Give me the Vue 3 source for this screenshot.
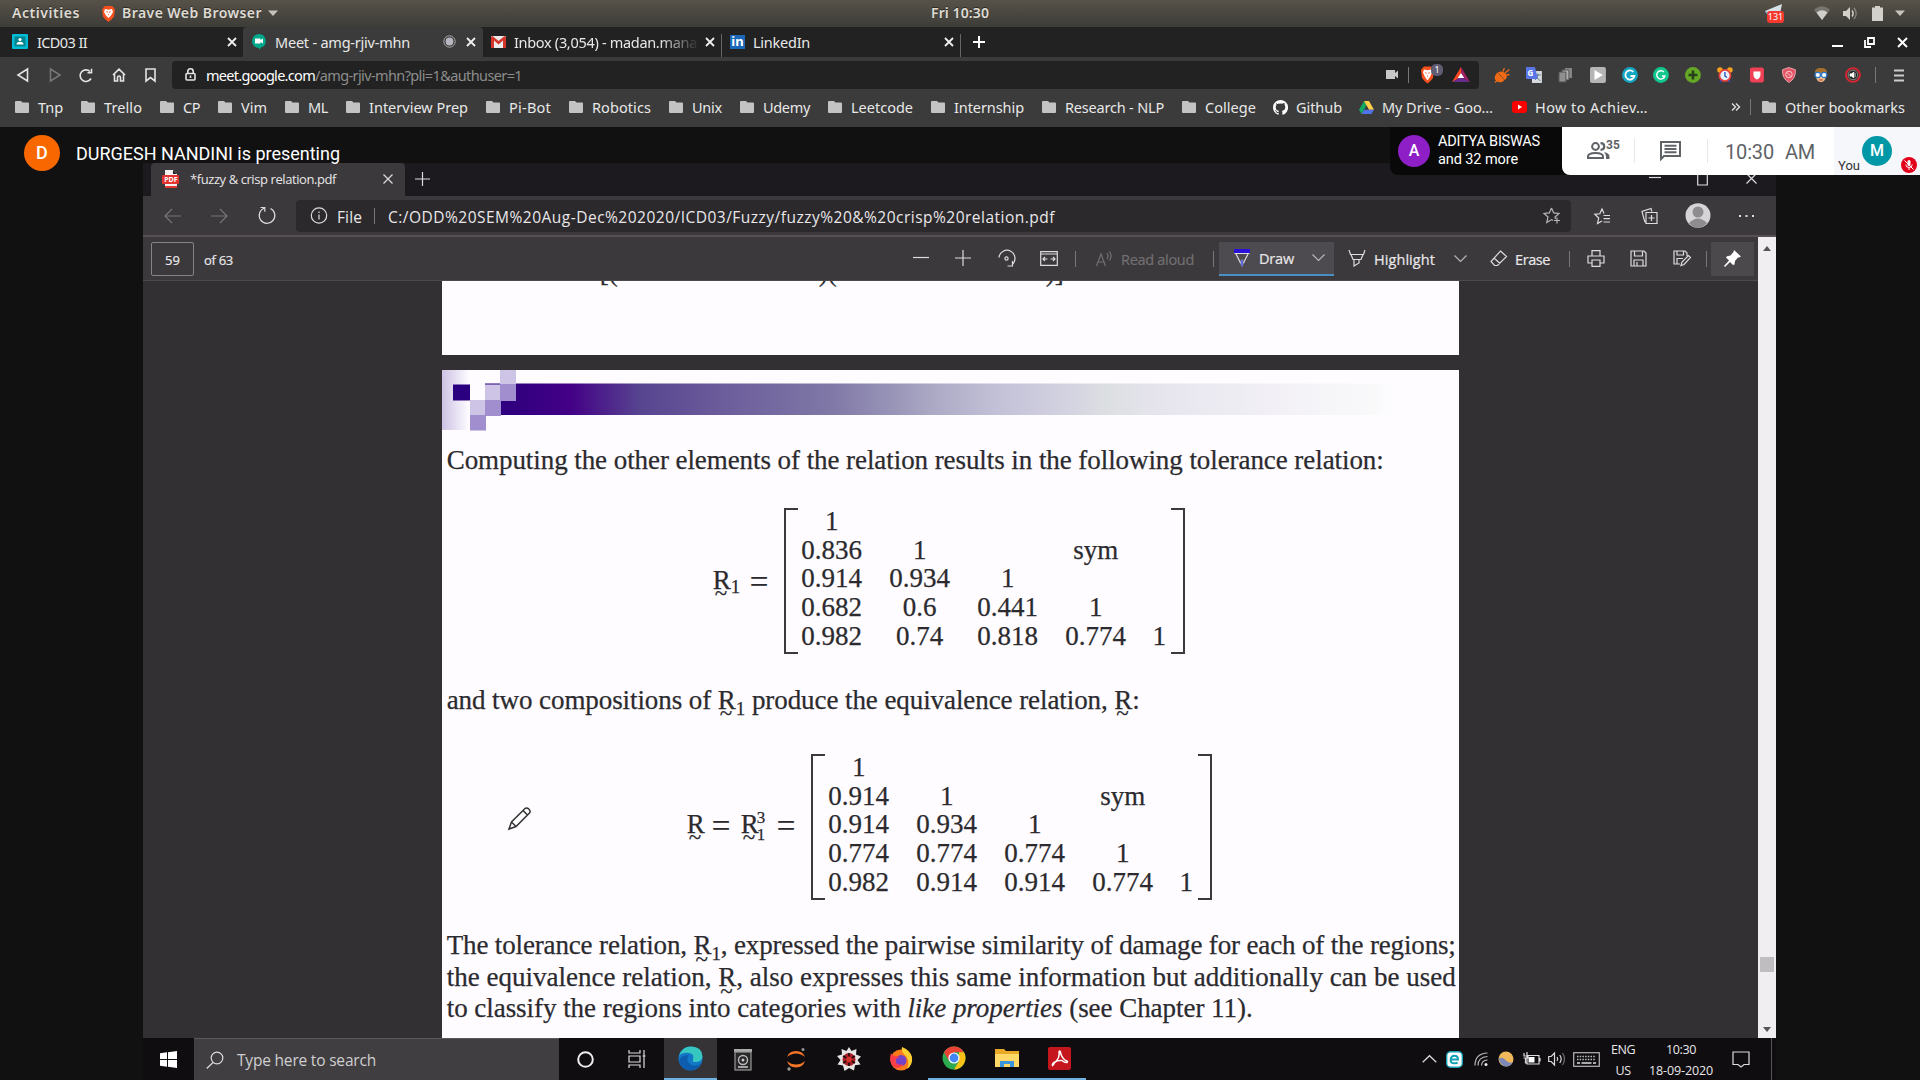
<script setup>
// Stretches or tightens tracking so a label occupies the given width
const vFit = {
  mounted(el, { value }) {
    const n = el.textContent.length
    let spacing = 0
    for (let i = 0; i < 3; i++) {
      spacing += (value - el.getBoundingClientRect().width) / n
      el.style.letterSpacing = spacing.toFixed(3) + 'px'
    }
  },
}

const folders = [
  ['Tnp', 25], ['Trello', 38], ['CP', 17], ['Vim', 26], ['ML', 20], ['Interview Prep', 99],
  ['Pi-Bot', 42], ['Robotics', 59], ['Unix', 30], ['Udemy', 47], ['Leetcode', 62],
  ['Internship', 70], ['Research - NLP', 99], ['College', 51],
]

const toleranceRows = [
  ['1', '', '', '', ''],
  ['0.836', '1', '', 'sym', ''],
  ['0.914', '0.934', '1', '', ''],
  ['0.682', '0.6', '0.441', '1', ''],
  ['0.982', '0.74', '0.818', '0.774', '1'],
]
const equivalenceRows = [
  ['1', '', '', '', ''],
  ['0.914', '1', '', 'sym', ''],
  ['0.914', '0.934', '1', '', ''],
  ['0.774', '0.774', '0.774', '1', ''],
  ['0.982', '0.914', '0.914', '0.774', '1'],
]
</script>

<template>
  <div class="screen">
    <!-- GNOME top bar -->
    <header class="gnome">
      <span class="g-text" v-fit="68">Activities</span>
      <svg class="g-brave" width="15" height="17" viewBox="0 0 15 17"><path d="M4 1h7l1.500 1.600 1.500 2-1 7-2.500 3L7.500 17l-3-2.400L2 11.600 1 4.600l1.500-2z" fill="#f4511e" /><path d="M4 4l3.500.7L11 4l1 3-2 3.500-2.500 2.500L5 10.500 3 7z" fill="#fff" /><path d="M4.800 6.500h2v1.400zM10.200 6.500h-2v1.400zM7 9h1l-.5 1.800z" fill="#f4511e" /></svg>
      <span class="g-text" v-fit="140">Brave Web Browser</span>
      <svg width="10" height="6" viewBox="0 0 10 6"><path d="M0 .5h10L5 6z" fill="#c6c3bd" /></svg>
      <span class="g-text" v-fit="58">Fri 10:30</span>
      <span class="telegram"><svg width="19" height="20" viewBox="0 0 19 20"><path d="M0 8L17 1l-2 10-8-3-5 3z" fill="#d5e1e7" /><path d="M0 8l5 2v6z" fill="#69b5d9" /></svg><b>131</b></span>
      <svg width="16" height="14" viewBox="0 0 16 14"><path d="M0 4Q8-3.500 16 4L8 14z" fill="#77746d" /><path d="M2.500 6.500Q8 2 13.500 6.500L8 14z" fill="#d2d0cb" /></svg>
      <svg width="16" height="15" viewBox="0 0 16 15"><path d="M1 5h3l4-4v13l-4-4H1z" fill="#d2d0cb" /><path d="M10 4.500q2.200 3 0 6" stroke="#d2d0cb" stroke-width="1.500" fill="none" /><path d="M12 2q4.500 5.500 0 11" stroke="#85827b" stroke-width="1.500" fill="none" /></svg>
      <svg width="11" height="15" viewBox="0 0 11 15"><path d="M3 0h5v1.500h3V15H0V1.500h3z" fill="#d2d0cb" /></svg>
      <svg width="10" height="6" viewBox="0 0 10 6"><path d="M0 .5h10L5 6z" fill="#c6c3bd" /></svg>
    </header>

    <!-- Tab strip -->
    <nav class="tabs">
      <div class="tab tab1">
        <svg width="16" height="15" viewBox="0 0 16 15"><rect width="16" height="15" rx="1" fill="#00bcd4" /><rect x="2.500" y="2.500" width="11" height="10" fill="#00838f" /><circle cx="8" cy="5.500" r="1.600" fill="#fff" /><path d="M4.500 10.500q0-2.700 3.500-2.700t3.500 2.700z" fill="#fff" /></svg>
        <span v-fit="50">ICD03 II</span>
        <svg class="cross" width="10" height="10" viewBox="0 0 10 10"><path d="M1 1l8 8M9 1L1 9" /></svg>
      </div>
      <div class="tab tab2">
        <svg width="14" height="16" viewBox="0 0 14 16"><path d="M7 0a7 7 0 0 1 2 13.600L7 16v-2A7 7 0 0 1 7 0z" fill="#00a88b" /><path d="M3 4.500h5.500v1.600L11 4.500v5l-2.500-1.600v1.600H3z" fill="#fff" /></svg>
        <span v-fit="135">Meet - amg-rjiv-mhn</span>
        <svg width="13" height="13" viewBox="0 0 13 13"><circle cx="6.500" cy="6.500" r="5.700" fill="none" stroke="#aaa" stroke-width="1" /><circle cx="6.500" cy="6.500" r="3.900" fill="#b8b6c0" /></svg>
        <svg class="cross" width="10" height="10" viewBox="0 0 10 10"><path d="M1 1l8 8M9 1L1 9" /></svg>
      </div>
      <div class="tab tab3">
        <svg width="15" height="12" viewBox="0 0 15 12"><rect width="15" height="12" rx="1" fill="#ededed" /><path d="M0 1v11h3V4.500l4.500 4 4.500-4V12h3V1l-1.500-1-6 5-6-5z" fill="#d5362b" /></svg>
        <div class="fade"><span v-fit="183">Inbox (3,054) - madan.mana</span></div>
        <svg class="cross" width="10" height="10" viewBox="0 0 10 10"><path d="M1 1l8 8M9 1L1 9" /></svg>
      </div>
      <div class="tab tab4">
        <span class="linkedin">in</span>
        <span v-fit="57">LinkedIn</span>
        <svg class="cross" width="10" height="10" viewBox="0 0 10 10"><path d="M1 1l8 8M9 1L1 9" /></svg>
      </div>
      <svg class="newtab" width="12" height="12" viewBox="0 0 12 12"><path d="M6 0v12M0 6h12" stroke="#fff" stroke-width="2" /></svg>
      <div class="winctl">
        <svg width="11" height="12" viewBox="0 0 11 12"><path d="M0 10h11" stroke="#fff" stroke-width="2" /></svg>
        <svg width="11" height="11" viewBox="0 0 11 11"><path d="M4 1h6v6H4zM1 3v7h6" stroke="#fff" stroke-width="1.800" fill="none" /></svg>
        <svg width="11" height="11" viewBox="0 0 11 11"><path d="M1 1l9 9M10 1l-9 9" stroke="#fff" stroke-width="2" /></svg>
      </div>
    </nav>

    <!-- Address row -->
    <div class="address">
      <svg width="12" height="14" viewBox="0 0 12 14"><path d="M10.500 1v12L1 7z" class="ln" /></svg>
      <svg width="12" height="14" viewBox="0 0 12 14"><path d="M1.500 1v12L11 7z" class="ln dim" /></svg>
      <svg width="14" height="15" viewBox="0 0 14 15"><path d="M12 10.500A5.800 5.800 0 1 1 11 3.500" class="ln" /><path d="M8.500 4.800h4V.8" class="ln" /></svg>
      <svg width="14" height="14" viewBox="0 0 14 14"><path d="M1 7l6-5.800L13 7M2.500 6v7h3V9.500a1.500 1.500 0 0 1 3 0V13h3V6" class="ln" /></svg>
      <svg width="11" height="14" viewBox="0 0 11 14"><path d="M1 1h9v12L5.500 9.500 1 13z" class="ln" /></svg>
      <div class="urlbar">
        <svg width="11" height="13" viewBox="0 0 11 13"><path d="M2.800 5V3.500a2.700 2.700 0 0 1 5.400 0V5" class="ln" /><rect x="1" y="5.500" width="9" height="6.500" rx="1" class="ln" /><path d="M5.500 7.500v2.500" class="ln" /></svg>
        <span class="host" v-fit="109">meet.google.com</span><span class="path" v-fit="207">/amg-rjiv-mhn?pli=1&amp;authuser=1</span>
        <svg class="cam" width="12" height="9" viewBox="0 0 12 9"><path d="M0 0h9v3l3-2.500v8L9 6v3H0z" fill="#c8c8c8" /></svg>
        <i class="vbar"></i>
        <span class="shield"><svg width="15" height="18" viewBox="0 0 15 17"><path d="M4 0h7l1.500 1.600 1.500 2-1 8-2.500 3L7.500 17l-3-2.400L2 11.600 1 3.600l1.500-2z" fill="#f4511e" /><path d="M4 3l3.500.7L11 3l1 3-2 4.500L7.500 14 5 10.500 3 6z" fill="#fff" /><path d="M4.500 6h2v1.400zM10.500 6h-2v1.400zM7 9h1l-.5 2z" fill="#f4511e" /></svg><b>1</b></span>
        <svg width="18" height="15" viewBox="0 0 18 15"><path d="M9 0L0 15l9-5z" fill="#ff4724" /><path d="M9 0l9 15-9-5z" fill="#9e1f63" /><path d="M0 15h18l-9-5z" fill="#662d91" /><path d="M9 6l3.200 5H5.800z" fill="#fff" /></svg>
      </div>
      <div class="exts">
        <svg viewBox="0 0 16 16"><path d="M3.500 6.500l6 6.500q-3 3-6.500.5T3.500 6.500z" fill="#f26b15" stroke="#f26b15" stroke-width="1.400" /><path d="M1 15.500l2-2M5 5.500l6 6.500q2.500-2.500 0-5T5 5.500zM9 4.500l1.500-3.500M11 6l4.500-3.500M12.500 8l3-.5" fill="#f26b15" stroke="#f26b15" stroke-width="1.300" /></svg>
        <svg viewBox="0 0 16 16"><rect x="6" y="4" width="10" height="12" fill="#d9dce0" /><path d="M9 8h6M12 6.500V8q0 3-3 5M10.500 10l4 4" stroke="#607d8b" fill="none" /><path d="M0 0h9l3 12H1q-1 0-1-1z" fill="#5876e8" /><text x="1.500" y="9" font-size="8" font-weight="700" fill="#fff">G</text></svg>
        <svg viewBox="0 0 16 16"><path d="M7 1h7v10H7z" fill="#8b8b8b" /><path d="M4 3h7v10H4z" fill="#b0b0b0" stroke="#555" /><path d="M1 5h7v10H1z" fill="#8f8f8f" stroke="#555" /></svg>
        <svg viewBox="0 0 16 16"><rect width="16" height="16" rx="2" fill="#b5b5b5" /><path d="M4.500 3v10L13 8z" fill="#fff" /></svg>
        <svg viewBox="0 0 16 16"><circle cx="8" cy="8" r="8" fill="#12a5c4" /><path d="M11.500 5A4.600 4.600 0 1 0 12.500 9H8.500" stroke="#fff" stroke-width="1.800" fill="none" /></svg>
        <svg viewBox="0 0 16 16"><circle cx="8" cy="8" r="8" fill="#11c78e" /><path d="M11 5A4.200 4.200 0 1 0 12 9H9" stroke="#fff" stroke-width="1.400" fill="none" /></svg>
        <svg viewBox="0 0 16 16"><circle cx="8" cy="8" r="8" fill="#65a825" /><path d="M8 3.500v9M3.500 8h9" stroke="#26411a" stroke-width="2.600" /></svg>
        <svg viewBox="0 0 16 16"><circle cx="3" cy="3" r="2.800" fill="#f9a11b" /><circle cx="13" cy="3" r="2.800" fill="#f9a11b" /><path d="M3 15l2-3M13 15l-2-3" stroke="#2948b8" stroke-width="2" /><circle cx="8" cy="8.500" r="5.600" fill="#e3f1fb" stroke="#e8413c" stroke-width="1.800" /><path d="M8 5v4l2 1.500" stroke="#2948b8" fill="none" stroke-width="1.300" /></svg>
        <svg viewBox="0 0 16 16"><rect x="1" y=".5" width="14" height="15" rx="2" fill="#ef4056" /><path d="M4.500 4.500h7V8q0 3-3.500 4.500Q4.500 11 4.500 8z" fill="#fff" /></svg>
        <svg viewBox="0 0 16 16"><path d="M8 .5l6.500 2.200q.5 8.800-6.500 12.800Q1 11.500 1.500 2.700z" fill="#e35464" stroke="#efa4aa" /><circle cx="8" cy="7.500" r="3.300" fill="none" stroke="#f6c7cc" /><path d="M5.700 5.200l4.600 4.600" stroke="#f6c7cc" /></svg>
        <svg viewBox="0 0 16 16"><path d="M2 7Q1 1 8 1t6 6l-1 2H3z" fill="#a7712c" /><path d="M3 6h10v4q-1 5-5 5t-5-5z" fill="#eec08a" /><circle cx="4.800" cy="8" r="2.700" fill="#fff" stroke="#2877c9" stroke-width="1.200" /><circle cx="11.200" cy="8" r="2.700" fill="#fff" stroke="#2877c9" stroke-width="1.200" /><path d="M6 13h4" stroke="#b33" /></svg>
        <svg viewBox="0 0 16 16"><circle cx="8" cy="8" r="7" fill="#3a3a3a" stroke="#e02331" stroke-width="1.800" /><circle cx="8" cy="8" r="4.800" fill="#222" stroke="#999" stroke-width=".8" /><path d="M5 6.800h1.500L9 5v6L6.500 9.200H5zM10.300 6v4" fill="#fff" stroke="#fff" stroke-width=".6" /></svg>
      </div>
      <i class="vbar"></i>
      <svg class="burger" width="10" height="13" viewBox="0 0 10 13"><path d="M0 1.500h10M0 6.500h10M0 11.500h10" stroke="#ccc" stroke-width="1.800" /></svg>
    </div>

    <!-- Bookmarks -->
    <div class="bookmarks">
      <div v-for="[name, w] in folders" :key="name" class="bm">
        <svg width="14" height="12" viewBox="0 0 14 12"><path d="M1 0h5l1.500 1.500H13q1 0 1 1V11q0 1-1 1H1q-1 0-1-1V1q0-1 1-1z" fill="#c3c3c3" /></svg>
        <span v-fit="w">{{ name }}</span>
      </div>
      <div class="bm wide">
        <svg width="15" height="15" viewBox="0 0 16 16"><path d="M8 0a8 8 0 0 0-2.500 15.600c.4 0 .5-.2.500-.4v-1.500c-2.200.5-2.700-1-2.700-1-.4-.9-.9-1.200-.9-1.200-.7-.5.1-.5.1-.5.800.1 1.200.9 1.200.9.700 1.200 1.900.9 2.300.7.100-.5.300-.9.500-1.100-1.800-.2-3.600-.9-3.600-4 0-.9.300-1.600.8-2.100-.1-.2-.4-1 .1-2.100 0 0 .7-.2 2.200.8a7.500 7.500 0 0 1 4 0c1.500-1 2.200-.8 2.200-.8.500 1.100.2 1.900.1 2.100.5.600.8 1.300.8 2.100 0 3.100-1.900 3.800-3.700 4 .3.300.6.800.6 1.500v2.200c0 .2.100.5.600.4A8 8 0 0 0 8 0z" fill="#fff" /></svg>
        <span v-fit="46">Github</span>
      </div>
      <div class="bm wide drive">
        <svg width="15" height="13" viewBox="0 0 15 13"><path d="M5 0L0 8.700 2.500 13l5-8.700z" fill="#11a861" /><path d="M5 0h5l5 8.700h-5z" fill="#ffcf48" /><path d="M5 8.700h10L12.500 13h-10z" fill="#4f73e8" /></svg>
        <span v-fit="111">My Drive - Goo…</span>
      </div>
      <div class="bm wide yt">
        <svg width="15" height="12" viewBox="0 0 15 12"><rect width="15" height="12" rx="3" fill="#f00" /><path d="M6 3.500v5L10 6z" fill="#fff" /></svg>
        <span v-fit="113">How to Achiev…</span>
      </div>
      <div class="bm-right">
        <svg width="10" height="8" viewBox="0 0 10 8"><path d="M1 .5L4.500 4 1 7.500M5 .5L8.500 4 5 7.500" stroke="#ddd" stroke-width="1.400" fill="none" /></svg>
        <i class="vbar"></i>
        <svg width="14" height="12" viewBox="0 0 14 12"><path d="M1 0h5l1.500 1.500H13q1 0 1 1V11q0 1-1 1H1q-1 0-1-1V1q0-1 1-1z" fill="#c3c3c3" /></svg>
        <span v-fit="120">Other bookmarks</span>
      </div>
    </div>

    <!-- Meet call -->
    <main class="meet">
      <div class="presenter">
        <span class="av av-d">D</span>
        <span class="who" v-fit="264">DURGESH NANDINI is presenting</span>
      </div>

      <section class="share">
        <div class="e-tabs">
          <div class="e-tab">
            <svg width="17" height="18" viewBox="0 0 17 18"><path d="M3 0h8l4 4v14H3z" fill="#f4f1f1" /><path d="M11 0l4 4h-4z" fill="#222" /><rect y="5" width="17" height="9" rx="1" fill="#e3342f" /><text x="2.200" y="12" font-size="7" font-weight="700" fill="#fff">PDF</text><path d="M3 16h12v2H3z" fill="#e3342f" /></svg>
            <span v-fit="146">*fuzzy &amp; crisp relation.pdf</span>
            <svg width="10" height="10" viewBox="0 0 10 10"><path d="M.5.5l9 9M9.500.5l-9 9" class="ed" /></svg>
          </div>
          <svg class="e-plus" width="15" height="14" viewBox="0 0 15 14"><path d="M7.500 0v14M0 7h15" class="ed" /></svg>
          <div class="e-win">
            <svg width="12" height="12" viewBox="0 0 12 12"><path d="M0 4.500h12" class="ed" /></svg>
            <svg width="11" height="14" viewBox="0 0 11 14"><path d="M.7.5h9.600v12.500H.7z" class="ed" /></svg>
            <svg width="11" height="11" viewBox="0 0 11 11"><path d="M.5.500l10 10M10.500.5l-10 10" class="ed" /></svg>
          </div>
        </div>

        <div class="e-nav">
          <svg width="17" height="16" viewBox="0 0 17 16"><path d="M17 8H1M8 1L1 8l7 7" class="ed dim" /></svg>
          <svg width="17" height="16" viewBox="0 0 17 16"><path d="M0 8h16M9 1l7 7-7 7" class="ed dim" /></svg>
          <svg width="18" height="19" viewBox="0 0 18 19"><path d="M6 2.300a7.800 7.800 0 1 0 6.500.2M2.500 1.500h4.300v4.300" class="ed" stroke-width="1.500" /></svg>
          <div class="e-url">
            <svg width="18" height="17" viewBox="0 0 18 17"><circle cx="9" cy="8.500" r="7.700" class="ed" /><path d="M9 7.500v5M9 4.500v1.500" class="ed" stroke-width="1.500" /></svg>
            <span class="file" v-fit="25">File</span>
            <i></i>
            <span class="e-path" v-fit="667">C:/ODD%20SEM%20Aug-Dec%202020/ICD03/Fuzzy/fuzzy%20&amp;%20crisp%20relation.pdf</span>
            <svg width="18" height="17" viewBox="0 0 18 17"><path d="M8.500 1l2.200 4.900 5.300.5-4 3.600.5 2M8.500 1L6.300 5.900 1 6.400 5 10l-1.200 5.400 4.700-2.800 1.500.9M14 10.500v6M11 13.500h6" class="ed soft" /></svg>
          </div>
          <svg width="17" height="16" viewBox="0 0 17 16"><path d="M8 13l-4.500 2.500L4.700 10 .8 6.300l5-.5L8 1l2 4.500M9.500 7.500H16M9.500 10.700H16M9.500 14H16" class="ed" /></svg>
          <svg width="17" height="17" viewBox="0 0 17 17"><path d="M5 15.500h0Q3.500 15 3.300 13L1 4.500l9-3 .8 3M5 5.500h11v11H5zM10.500 8v6M7.500 11h6" class="ed" /></svg>
          <svg width="26" height="25" viewBox="0 0 26 25"><ellipse cx="13" cy="12.500" rx="12.500" ry="12.200" fill="#d6d4d6" /><circle cx="13" cy="9" r="5.500" fill="#8e8c8e" /><path d="M4 20q9-9 18 0-3.500 4.700-9 4.700T4 20z" fill="#8e8c8e" /></svg>
          <svg width="17" height="4" viewBox="0 0 17 4"><path d="M1 2h2M7.500 2h2M14 2h2" stroke="#ddd" stroke-width="2" /></svg>
        </div>

        <div class="viewer">
          <div class="viewer-main">
            <div class="pdfbar">
              <span class="pageno">59</span>
              <span class="pagecount" v-fit="29">of 63</span>
              <svg width="16" height="16" viewBox="0 0 16 16"><path d="M0 6.500h16" class="ed" /></svg>
              <svg width="16" height="16" viewBox="0 0 16 16"><path d="M0 7h16M8-1v16" class="ed" /></svg>
              <svg width="18" height="18" viewBox="0 0 18 18"><path d="M1 7.500A8 8 0 1 1 14 14.500M14.500 11v5h-5" class="ed" stroke-width="1.500" /><circle cx="8.500" cy="8.500" r="1.600" class="ed" /></svg>
              <svg width="18" height="15" viewBox="0 0 18 15"><path d="M.7.7h16.600v13.600H.7zM1 3h16M3.500 8h4M10.500 8h4M5 6L3 8l2 2M13 6l2 2-2 2" class="ed" /></svg>
              <i></i>
              <svg width="17" height="16" viewBox="0 0 17 16"><path d="M.5 15L5 3l4.500 12M2.200 11h5.700M11 2q2 3 0 6M13.500.500q3 4.500 0 9" class="ed mute" /></svg>
              <span class="mute-t" v-fit="73">Read aloud</span>
              <i></i>
              <div class="draw">
                <svg width="18" height="18" viewBox="0 0 18 18"><path d="M1 0h16v4H1z" fill="#2a10d8" /><path d="M1.500 4.500h15M3 5l4.500 9h3L15 5" class="ed" /><path d="M8 11h2v5l-1 1.500L8 16z" fill="#3c50f0" stroke="#aac" stroke-width=".5" /></svg>
                <span v-fit="35">Draw</span>
                <svg width="13" height="8" viewBox="0 0 13 8"><path d="M.5.5l6 6 6-6" class="ed soft" /></svg>
              </div>
              <svg width="18" height="18" viewBox="0 0 18 18"><path d="M1 0l1.500 4.500h13L17 0M3 4.500l2 5h8l2-5M6 10v6l5-3v-3" class="ed" /></svg>
              <span v-fit="61">Highlight</span>
              <svg width="13" height="8" viewBox="0 0 13 8"><path d="M.5.5l6 6 6-6" class="ed soft" /></svg>
              <svg width="18" height="17" viewBox="0 0 18 17"><path d="M10.500 1l6 5.500-9 9H4.500l-3.500-4zM4 8l6 5.500" class="ed" /></svg>
              <span v-fit="35">Erase</span>
              <i></i>
              <svg width="18" height="17" viewBox="0 0 18 17"><path d="M5 6V.7h8V6M5 13H1V6h16v7h-4M5 10h8v6.300H5z" class="ed" /></svg>
              <svg width="17" height="17" viewBox="0 0 17 17"><path d="M1 1h13l2 2v13H1zM4.500 1v5h8V1M4 16v-6h9v6M7 12v4" class="ed" /></svg>
              <svg width="18" height="17" viewBox="0 0 18 17"><path d="M7 14H1V1h11l2 2v3M4 1v4h6.500V1M4 14V8.500h6M8 15.500l1-3.500 6.500-6.500 2 2L11 14.500z" class="ed" /></svg>
              <i></i>
              <div class="pin"><svg width="17" height="17" viewBox="0 0 17 17"><path d="M10 0l7 6.500-2 1-1 0-3 3.500-.5 3.500-1.500.5-3-3L1 17l-1-1 5-5.500-3-3 1-1.300 3.500-.7L9.500 2z" fill="#fff" /></svg></div>
            </div>

            <div class="canvas">
              <div class="page prev"><span>[(</span><span>)(</span><span>)]</span></div>
              <article class="page slide">
                <svg class="banner" width="1017" height="62" viewBox="0 0 1017 62">
                  <defs>
                    <linearGradient id="bar"><stop offset="0" stop-color="#2b0080" /><stop offset=".03" stop-color="#30007f" /><stop offset=".093" stop-color="#430086" /><stop offset=".17" stop-color="#574590" /><stop offset=".25" stop-color="#6a5a9a" /><stop offset=".38" stop-color="#8079a7" /><stop offset=".45" stop-color="#9a96b9" /><stop offset=".487" stop-color="#aba8c4" /><stop offset=".56" stop-color="#c3c1d7" /><stop offset=".64" stop-color="#d4d3e1" /><stop offset=".68" stop-color="#dcdfe2" /><stop offset=".73" stop-color="#e5e4ed" /><stop offset=".86" stop-color="#f2f0f6" /><stop offset=".97" stop-color="#f9f9fa" /><stop offset="1" stop-color="#fefcff" /></linearGradient>
                    <linearGradient id="edge"><stop offset="0" stop-color="#cdc2e4" /><stop offset="1" stop-color="#fefcff" /></linearGradient>
                  </defs>
                  <rect width="27" height="60" fill="url(#edge)" />
                  <rect x="43" y="13.500" width="915" height="31.500" fill="url(#bar)" />
                  <rect x="11" y="14.500" width="17" height="16" fill="#2b0080" />
                  <rect x="43" y="30" width="16" height="16" fill="#a08ecf" />
                  <rect x="28" y="45" width="16" height="15.500" fill="#a08ecf" />
                  <rect x="58" y="14" width="16" height="17" fill="#a08ecf" />
                  <rect x="43" y="14.500" width="15" height="15.500" fill="#cec5e6" />
                  <rect x="28" y="30" width="15" height="15" fill="#cec5e6" />
                  <rect x="58" y="0" width="16" height="14" fill="#cec5e6" />
                </svg>
                <p><span v-fit="937">Computing the other elements of the relation results in the following tolerance relation:</span></p>
                <div class="equation first">
                  <div class="lhs one"><span class="und">R</span><small>1</small><b>=</b></div>
                  <div class="matrix"><template v-for="(row, r) in toleranceRows" :key="r"><span v-for="(cell, c) in row" :key="c">{{ cell }}</span></template></div>
                </div>
                <p><span v-fit="693">and two compositions of <span class="und">R</span><small>1</small> produce the equivalence relation, <span class="und">R</span>:</span></p>
                <div class="equation second">
                  <div class="lhs two"><span class="und">R</span><b>=</b><span class="und">R</span><span class="stack"><small>3</small><small>1</small></span><b>=</b></div>
                  <div class="matrix"><template v-for="(row, r) in equivalenceRows" :key="r"><span v-for="(cell, c) in row" :key="c">{{ cell }}</span></template></div>
                </div>
                <div class="closing">
                  <span v-fit="1009">The tolerance relation, <span class="und">R</span><small>1</small>, expressed the pairwise similarity of damage for each of the regions;</span>
                  <span v-fit="1009">the equivalence relation, <span class="und">R</span>, also expresses this same information but additionally can be used</span>
                  <span v-fit="806">to classify the regions into categories with <em>like properties</em> (see Chapter 11).</span>
                </div>
                <svg class="cursor" width="23" height="23" viewBox="0 0 23 23"><path d="M1 22l2.500-7L17 1.500q2-1.200 4 .8t.5 3.700L8 19.500zM3.500 15L8 19.500M15 3.500l4.500 4.500" fill="#fff" stroke="#333" stroke-width="1.500" /></svg>
              </article>
            </div>
          </div>
          <div class="scroll">
            <svg width="8" height="5" viewBox="0 0 8 5"><path d="M0 5h8L4 0z" fill="#555" /></svg>
            <b></b>
            <svg width="8" height="5" viewBox="0 0 8 5"><path d="M0 0h8L4 5z" fill="#555" /></svg>
          </div>
        </div>

        <footer class="taskbar">
          <div class="start"><svg width="17" height="17" viewBox="0 0 17 17"><path d="M0 2.300l7-1V8H0zM8 1.200L17 0v8H8zM0 9h7v6.700l-7-1zM8 9h9v8l-9-1.200z" fill="#fff" /></svg></div>
          <div class="search">
            <svg width="18" height="18" viewBox="0 0 18 18"><circle cx="11" cy="7" r="5.800" class="ed" stroke-width="1.500" /><path d="M7 11.500L.7 17.500" class="ed" stroke-width="1.500" /></svg>
            <span v-fit="139">Type here to search</span>
          </div>
          <div class="apps">
            <div><svg width="17" height="17" viewBox="0 0 17 17"><circle cx="8.500" cy="8.500" r="7.300" fill="none" stroke="#eee" stroke-width="2" /></svg></div>
            <div><svg width="20" height="18" viewBox="0 0 20 18"><path d="M1 0v3h11V0M1 6h11v6H1zM1 18v-3h11v3M16 0v18M14.500 6h3" class="ed" /></svg></div>
            <div class="active"><svg width="25" height="25" viewBox="0 0 25 25"><circle cx="12.500" cy="12.500" r="12" fill="#1478c8" /><path d="M1 10Q4 .5 13 .5q11 0 11.500 10Q24 16 17 16q-3 0-2-2 2-6-4-7Q4 6 1 10z" fill="#36c7c0" /><path d="M11 9q-4 5 1 9 5 3.500 11-.5-4 7-11 7Q3 24 1 15q1-6 10-6z" fill="#0d5cae" /></svg></div>
            <div><svg width="20" height="23" viewBox="0 0 20 23"><path d="M1 1h18v3H1z" fill="#aaa" /><rect x="2" y="4" width="16" height="18" fill="#292729" stroke="#999" stroke-width="1.200" /><circle cx="10" cy="12" r="4.500" fill="none" stroke="#bbb" stroke-width="1.400" /><circle cx="10" cy="12" r="1.500" fill="#ccc" /><path d="M5 19h10" stroke="#ccc" stroke-width="1.500" /></svg></div>
            <div><svg width="20" height="24" viewBox="0 0 20 24"><path d="M1 10Q3 4 10 4t9 6q-4-3.500-9-3.500T1 10zM1 14q2 6.500 9 6.500t9-6.500q-4 3.500-9 3.500T1 14z" fill="#f37726" /><circle cx="17" cy="2.500" r="1.500" fill="#999" /><circle cx="3" cy="22" r="1.700" fill="#999" /></svg></div>
            <div><svg width="24" height="24" viewBox="0 0 24 24"><path d="M12 0l2.500 4 5-2-.5 5.500 5 2L20.500 13l3 4.500-5.500.8-1 5.200-5-2.500L7.500 24 6 18.500l-5.500-1L3.500 13 0 9l5-1.500L4.500 2l5 2z" fill="#e7e4e4" /><circle cx="12" cy="12.500" r="6.500" fill="#a91f27" /><path d="M12 6v13M6 9l12 7M18 9L6 16" stroke="#240c0d" stroke-width="1.600" /><circle cx="12" cy="12.500" r="3" fill="#d6322e" /></svg></div>
            <div><svg width="24" height="24" viewBox="0 0 24 24"><circle cx="12" cy="13" r="10.500" fill="#ff7a1a" /><path d="M13 0q8 3 10 10 1 8-5 12 4-9-3-15-3-3-2-7z" fill="#ffcf32" /><circle cx="12" cy="13.500" r="5.500" fill="#7542c9" /><path d="M2 6q1 3 5 3l4 1q-5 1-5 5 3 4 8 2-3 6-9 3-6-5-3-14z" fill="#ff3d48" /></svg></div>
            <div class="open"><svg width="24" height="24" viewBox="0 0 24 24"><circle cx="12" cy="12" r="11.500" fill="#2da94f" /><path d="M12 .5A11.500 11.500 0 0 1 22 6.300H12L7 15 2 6.300A11.500 11.500 0 0 1 12 .5z" fill="#ea4335" /><path d="M22 6.300a11.500 11.500 0 0 1-10 17.200L17 15V6.300z" fill="#fbc116" /><circle cx="12" cy="12" r="5.600" fill="#fff" /><circle cx="12" cy="12" r="4.400" fill="#4285f4" /></svg></div>
            <div class="open"><svg width="24" height="20" viewBox="0 0 24 20"><path d="M0 1h9l2 2h13v16H0z" fill="#e9a825" /><path d="M0 6h24v13H0z" fill="#ffd868" /><path d="M5 19v-6h14v6h-4v-3H9v3z" fill="#3a95dc" /></svg></div>
            <div class="open"><svg width="23" height="23" viewBox="0 0 23 23"><rect width="23" height="23" rx="2" fill="#c4161c" /><path d="M4.500 18.500q-1-2 3.500-4 4-5 3-9.500.5-2 1.500 0 .5 5 5 8.500 3 .5 1.500 2-2 .5-5-2-4-.5-7 1.500-1.500 3-2.500 3.500z" fill="none" stroke="#fff" stroke-width="1.500" /></svg></div>
          </div>
          <div class="tray">
            <svg width="15" height="8" viewBox="0 0 15 8"><path d="M.7 7.300l6.800-6.600 6.800 6.600" class="ed" /></svg>
            <svg width="17" height="17" viewBox="0 0 17 17"><rect x=".7" y=".7" width="15.600" height="15.600" rx="4" fill="#fff" stroke="#16a0b4" stroke-width="1.400" /><path d="M4.500 8.500h7.500Q12 4.700 8.500 4.700T4.700 8.600 8.700 12.300q2 0 3-.8" fill="none" stroke="#11a1b3" stroke-width="2" /></svg>
            <svg width="14" height="14" viewBox="0 0 14 14"><path d="M1 13.500Q1 1.500 13.500 1M4 13.500Q4 5 13.500 4.500M7.500 13.500Q7.500 8.500 13.500 8" class="ed soft" /><circle cx="12" cy="12.500" r="1.500" fill="#eee" /></svg>
            <svg width="16" height="16" viewBox="0 0 16 16"><circle cx="8" cy="8" r="7.500" fill="#efb95b" /><path d="M.5 8Q4 5 7.500 9t7.500 2q-2.500 4.500-7 4.500T.5 8z" fill="#7e88b8" /></svg>
            <svg width="18" height="14" viewBox="0 0 18 14"><path d="M4 3.500h12v8.500H4zM17 6v3.500M1 1v3M4 0v3M.5 4H5v2H.5M2.500 6v5H4" class="ed" /><path d="M5.500 5h6v5.500h-6z" fill="#fff" /></svg>
            <svg width="18" height="14" viewBox="0 0 18 14"><path d="M.7 4.500h2.500L6.500 1v12L3.200 9.500H.7zM9 5q1.500 2 0 4M11.700 3q3 4 0 8" class="ed" /><path d="M14.500 1q4 6 0 12" class="ed mute" /></svg>
            <svg width="27" height="15" viewBox="0 0 27 15"><rect x=".7" y=".7" width="25.600" height="13.600" class="ed soft" /><path d="M4 4.500h19M4 7.500h19" stroke="#bbb" stroke-width="1.300" stroke-dasharray="1.500 1.200" /><path d="M4 11h3M8.500 11h10M20 11h3" stroke="#ddd" stroke-width="1.500" /></svg>
            <div class="stackt"><span v-fit="24">ENG</span><span v-fit="15">US</span></div>
            <div class="stackt date"><span v-fit="30">10:30</span><span v-fit="64">18-09-2020</span></div>
            <svg width="18" height="17" viewBox="0 0 18 17"><path d="M1 1h16v12.500h-5L9 16l-3-2.500H1z" class="ed" /></svg>
          </div>
        </footer>
      </section>

      <!-- Floating call controls -->
      <div class="callbar">
        <div class="speaker">
          <span class="av av-a">A</span>
          <div><span v-fit="102">ADITYA BISWAS</span><span v-fit="80">and 32 more</span></div>
        </div>
        <div class="panel">
          <svg width="23" height="18" viewBox="0 0 23 18"><g fill="none" stroke="#5f6368" stroke-width="2"><circle cx="8.500" cy="4.500" r="3.400" /><path d="M1 16v-1.500q0-3.500 7.500-3.500t7.500 3.500V16z" /><path d="M13.500 1.200q3.700 0 3.700 3.300t-3.700 3.300" stroke-width="2.200" /></g><path d="M17 10q5.500 1 5.500 4.500V17H19v-2.500Q19 12 17 10z" fill="#5f6368" /></svg>
          <sup>35</sup>
          <i></i>
          <svg width="21" height="20" viewBox="0 0 21 20"><path d="M1 18V1h19v14H4z" fill="none" stroke="#5f6368" stroke-width="2" /><path d="M4.500 4.800h12M4.500 8h12M4.500 11.200h12" stroke="#5f6368" stroke-width="1.900" /></svg>
          <i></i>
          <span v-fit="49">10:30</span>
          <span v-fit="30">AM</span>
        </div>
        <div class="self">
          <small>You</small>
          <span class="av av-m">M</span>
          <svg width="16" height="16" viewBox="0 0 16 16"><circle cx="8" cy="8" r="8" fill="#e2001a" /><rect x="6.500" y="3" width="3" height="6" rx="1.500" fill="#fff" /><path d="M4.800 7.500q0 3 3.200 3t3.200-3M8 10.500V13M3.500 3.500l9 9" stroke="#fff" fill="none" /></svg>
        </div>
      </div>
    </main>
  </div>
</template>

<style>
html, body { margin: 0; background: #111; overflow: hidden; }
</style>

<style scoped>
*, *::before, *::after { box-sizing: border-box; }
.screen { width: 1920px; height: 1080px; display: flex; flex-direction: column; overflow: hidden; background: #111; color: #e8e8e8; font: 14.5px/18px "Noto Sans", sans-serif; }
svg { display: block; flex: none; overflow: visible; }
span { white-space: nowrap; }
[class*="g-text"], .tab span, .bm span, .bm-right span { justify-self: start; }

.gnome { flex: none; height: 27px; display: grid; grid-template-columns: 89px 21px 146px 663px 834px 49px 28px 30px 23px 20px; padding: 0 0 1px 12px; align-items: center; background: linear-gradient(#575249, #3d3c37); }
.g-text { font-weight: 600; color: #dfdbd2; text-shadow: 0 -1px #2b2a26; font-size: 14px; }
.telegram { position: relative; height: 20px; }
.telegram b { position: absolute; left: 2px; top: 8px; width: 17px; height: 12px; border-radius: 3px; background: #f5392e; color: #fff; font: 9px/12px "Noto Sans", sans-serif; text-align: center; }

.tabs { flex: none; height: 30px; display: flex; background: #222; align-items: center; }
.tab { height: 30px; display: grid; align-items: center; padding-bottom: 1px; }
.tab span, .bm span, .bm-right span { display: inline-block; }
.tab1 { width: 243px; padding-left: 12px; grid-template-columns: 25px 190px 10px; }
.tab2 { width: 240px; padding-left: 9px; grid-template-columns: 23px 168px 23px 10px; background: #3b3b3b; border-radius: 4px 4px 0 0; }
.tab3 { width: 239px; padding-left: 8px; grid-template-columns: 23px 191px 10px; background: linear-gradient(#666, #666) right 7px / 1px 23px no-repeat; }
.tab4 { width: 239px; padding-left: 8px; grid-template-columns: 23px 191px 10px; background: linear-gradient(#666, #666) right 7px / 1px 23px no-repeat; }
.fade { width: 187px; height: 18px; -webkit-mask: linear-gradient(90deg, #000 145px, transparent 186px); mask: linear-gradient(90deg, #000 145px, transparent 186px); }
.cross path { stroke: #f0f0f0; stroke-width: 1.8; }
.tab .linkedin { width: 15px; height: 14px; background: #1b68b8; color: #fff; font: 700 13px/13px "Noto Sans", sans-serif; text-align: center; }
.newtab { margin-left: 12px; }
.winctl { margin-left: auto; width: 88px; display: grid; grid-template-columns: 32px 33px 11px; align-items: center; }

.address { flex: none; height: 37px; background: #3b3b3b; padding: 0 0 1px 17px; display: grid; grid-template-columns: 32px 30px 33px 33px 27px 1322px 381px 19px 10px; align-items: center; }
.ln { fill: none; stroke: #e4e4e4; stroke-width: 1.6; }
.ln.dim { stroke: #777; }
.urlbar { width: 1307px; height: 28px; border-radius: 4px; background: #222; display: grid; grid-template-columns: 21px 109px 1071px 22px 12px 32px 18px; padding: 0 0 1px 13px; align-items: center; }
.urlbar span { justify-self: start; }
.host { color: #fff; }
.path { color: #8c8c8c; }
.vbar { width: 1px; height: 16px; background: #777; }
.shield { position: relative; }
.shield b { position: absolute; left: 11px; top: -2px; width: 12px; height: 12px; border-radius: 5px; background: #5f5c73; color: #fff; font: 9px/12px "Noto Sans", sans-serif; text-align: center; }
.exts { display: flex; gap: 16px; }
.exts svg { width: 15.9px; height: 16px; }

.bookmarks { flex: none; height: 33px; background: #3b3b3b; display: flex; gap: 18px; padding: 0 15px 7px; align-items: center; }
.bm { display: flex; gap: 9px; align-items: center; flex: none; }
.bm.wide { gap: 8px; margin-left: -1px; }
.bm.yt { margin-left: 1px; }
.bm span, .bm-right span { margin-top: -1px; }
.bm-right { margin-left: auto; display: grid; grid-template-columns: 19px 12px 23px 120px; align-items: center; }

.meet { flex: 1; position: relative; background: #111; padding-left: 143px; padding-top: 36px; font-family: Roboto, sans-serif; }
.av { display: flex; align-items: center; justify-content: center; border-radius: 50%; color: #fff; font-weight: 500; }
.presenter { position: absolute; z-index: 2; left: 24px; top: 8px; display: flex; align-items: center; gap: 16px; font-size: 18px; color: #fff; }
.who { margin-top: 2px; }
.av-d { width: 36px; height: 36px; background: #f96800; font-size: 18px; }

.callbar { position: absolute; z-index: 2; right: 0; top: 0; width: 530px; height: 48px; display: flex; border-radius: 0 0 0 8px; overflow: hidden; background: #0a090a; }
.speaker { width: 172px; display: flex; align-items: center; gap: 8px; padding-left: 8px; color: #fff; font-size: 14.500px; }
.speaker > div { display: flex; flex-direction: column; align-items: flex-start; }
.av-a { width: 32px; height: 32px; background: #8e1ec6; font-size: 16px; }
.panel { width: 272px; background: #fff; border-radius: 0 0 0 8px; padding-left: 25px; display: grid; grid-template-columns: 19px 28px 26px 47px 18px 60px 35px; align-items: center; color: #5f6368; font-size: 20px; }
.panel span { justify-self: start; margin-top: 1px; }
.panel sup { font: 700 12px/12px Roboto, sans-serif; margin-top: -12px; color: #5f6368; }
.panel i { width: 1px; height: 24px; background: #e8e8e8; }
.self { flex: 1; background: #f6f7fa; display: flex; padding-left: 4px; color: #333; }
.self small { font: 13px/16px Roboto, sans-serif; margin-top: 31px; width: 24px; }
.av-m { width: 30px; height: 30px; margin-top: 9px; background: #0097a7; font-size: 16px; }
.self svg { margin: 30px 0 0 9px; }

.share { width: 1633px; height: 917px; display: flex; flex-direction: column; font: 13.500px/18px "Open Sans", "Noto Sans", sans-serif; color: #e9e7e9; }
.ed { fill: none; stroke: #dddbdd; stroke-width: 1.2; }
.ed.dim { stroke: #777577; }
.ed.soft { stroke: #b8b6b8; }
.ed.mute { stroke: #727072; }
.e-tabs { height: 33px; background: #1c1a1e; display: flex; padding: 0 0 2px 8px; align-items: center; }
.e-tab { width: 254px; height: 33px; margin-bottom: -2px; border-radius: 4px 4px 0 0; background: #3b393c; padding: 0 0 2px 11px; display: grid; grid-template-columns: 28px 193px 10px; align-items: center; }
.e-tab span { justify-self: start; font-size: 13px; }
.e-plus { margin-left: 10px; }
.e-win { margin-left: auto; width: 127px; display: grid; grid-template-columns: 48px 49px 11px; align-items: center; }
.e-nav { height: 41px; border-bottom: 2px solid #565056; background: #3b393c; padding-left: 21px; display: grid; grid-template-columns: 47px 47px 38px 1298px 47px 44px 53px 17px; align-items: center; }
.e-url { width: 1275px; height: 32px; border-radius: 4px; background: #2b292c; padding-left: 14px; display: grid; grid-template-columns: 27px 37px 14px 1155px 18px; align-items: center; font-size: 15.500px; }
.e-url span, .pdfbar > span { justify-self: start; margin-top: 2px; }
.e-url i { width: 1px; height: 16px; background: #777; }
.viewer { height: 801px; display: flex; }
.viewer-main { width: 1615px; }
.pdfbar { height: 44px; background: #3b393c; border-bottom: 1px solid #4c4a4d; padding-left: 8px; display: grid; grid-template-columns: 53px 709px 42px 43px 42px 35px 21px 25px 92px 6px 129px 26px 80px 36px 25px 54px 18px 43px 43px 33px 5px 43px; align-items: center; font-size: 14.500px; -webkit-text-stroke: .2px; }
.pdfbar > i { width: 1px; height: 16px; background: #777; }
.pdfbar .pageno { width: 43px; height: 34px; margin-top: 1px; border: 1px solid #858385; border-radius: 2px; line-height: 34px; text-align: center; font-size: 13px; }
.pdfbar .pagecount { font-size: 13px; }
.pdfbar .mute-t { color: #727072; }
.draw { width: 115px; height: 34px; background: #4d4b4f; border-bottom: 2px solid #4b8ec4; display: grid; grid-template-columns: 26px 53px 13px; align-items: center; padding-left: 14px; }
.draw span { justify-self: start; margin-top: 3px; }
.pin { width: 43px; height: 34px; background: #4b494c; display: flex; align-items: center; justify-content: center; }
.scroll { width: 18px; background: #f0eef0; display: flex; flex-direction: column; align-items: center; padding: 9px 0 6px; }
.scroll b { width: 14px; height: 15px; background: #bfbdbf; margin: 706px 0 auto; }

.canvas { height: 757px; overflow: hidden; background: #323032; padding-left: 298.700px; font: 27px/32px "Liberation Serif", serif; color: #2b2a2e; -webkit-text-stroke: .25px; }
.page { width: 1017px; background: #fefcff; }
.prev { height: 73.500px; margin-bottom: 15px; overflow: hidden; display: grid; grid-template-columns: 219px 227px 40px; padding-left: 158px; line-height: 30px; }
.prev span { margin-top: -24px; }
.slide { position: relative; height: 670px; }
.slide p { margin: 0; height: 32px; padding-left: 5px; }
.slide p > span, .closing > span { display: inline-block; }
.slide p:first-of-type { margin-top: 12.500px; }
.und { position: relative; display: inline-block; }
.und::after { content: "~"; position: absolute; left: 2px; top: 14px; font-size: 23px; letter-spacing: 0; }
.slide small { font-size: 19px; line-height: 0; position: relative; top: 6px; }
.equation { display: flex; height: 146px; }
.equation.first { margin: 32px 0 29.500px; padding-left: 271px; }
.equation.second { margin: 38.500px 0 30px; padding-left: 245px; }
.lhs { padding-top: 54px; display: grid; align-items: start; }
.lhs.one { padding-top: 56px; width: 71px; grid-template-columns: 18px 19px 30px; }
.lhs.two { width: 124px; grid-template-columns: 25px 29px 16px 20px 30px; }
.lhs small { line-height: 32px; top: 7px; }
.lhs b { font-weight: 400; font-size: 33px; margin-top: 2px; }
.lhs .stack { display: flex; flex-direction: column; }
.lhs .stack small { height: 17px; line-height: 17px; top: 1px; font-size: 17px; }
.matrix { position: relative; width: 401px; display: grid; grid-template-columns: 88px 88px 88px 88px 39px; grid-auto-rows: 28.700px; padding-left: 4px; margin-top: -1px; line-height: 28.700px; text-align: center; }
.matrix::before, .matrix::after { content: ""; position: absolute; top: 1px; height: 146px; width: 14px; border: solid #3a393d; }
.matrix::before { left: 0; border-width: 2px 0 2px 2px; }
.matrix::after { right: 0; border-width: 2px 2px 2px 0; }
.closing { padding-left: 5px; line-height: 31.500px; display: flex; flex-direction: column; align-items: flex-start; }
.cursor { position: absolute; left: 66px; top: 437px; }

.taskbar { flex: 1; background: #0f0d10; display: flex; align-items: stretch; }
.start { width: 51px; display: flex; align-items: center; justify-content: center; }
.search { width: 365px; background: #403e41; border-top: 1px solid #5a585b; display: grid; grid-template-columns: 31px 200px; padding-left: 12px; align-items: center; font-size: 15.500px; color: #d0ced0; }
.search span { justify-self: start; }
.apps { display: flex; }
.apps div { width: 52.700px; display: flex; align-items: center; justify-content: center; }
.apps .active { background: #353336; border-bottom: 2px solid #6fb1e0; }
.apps .open { border-bottom: 2px solid #6fb1e0; }
.tray { margin-left: auto; width: 354px; display: grid; grid-template-columns: 24px 28px 24px 25px 25px 25px 34px 32px 93px 18px; align-items: center; background: linear-gradient(#555, #555) 349px 0 / 1px 100% no-repeat; }
.stackt { display: flex; flex-direction: column; align-items: center; justify-content: space-between; height: 39px; margin-top: 3px; font-size: 12.500px; }
.date { width: 84px; }
</style>
